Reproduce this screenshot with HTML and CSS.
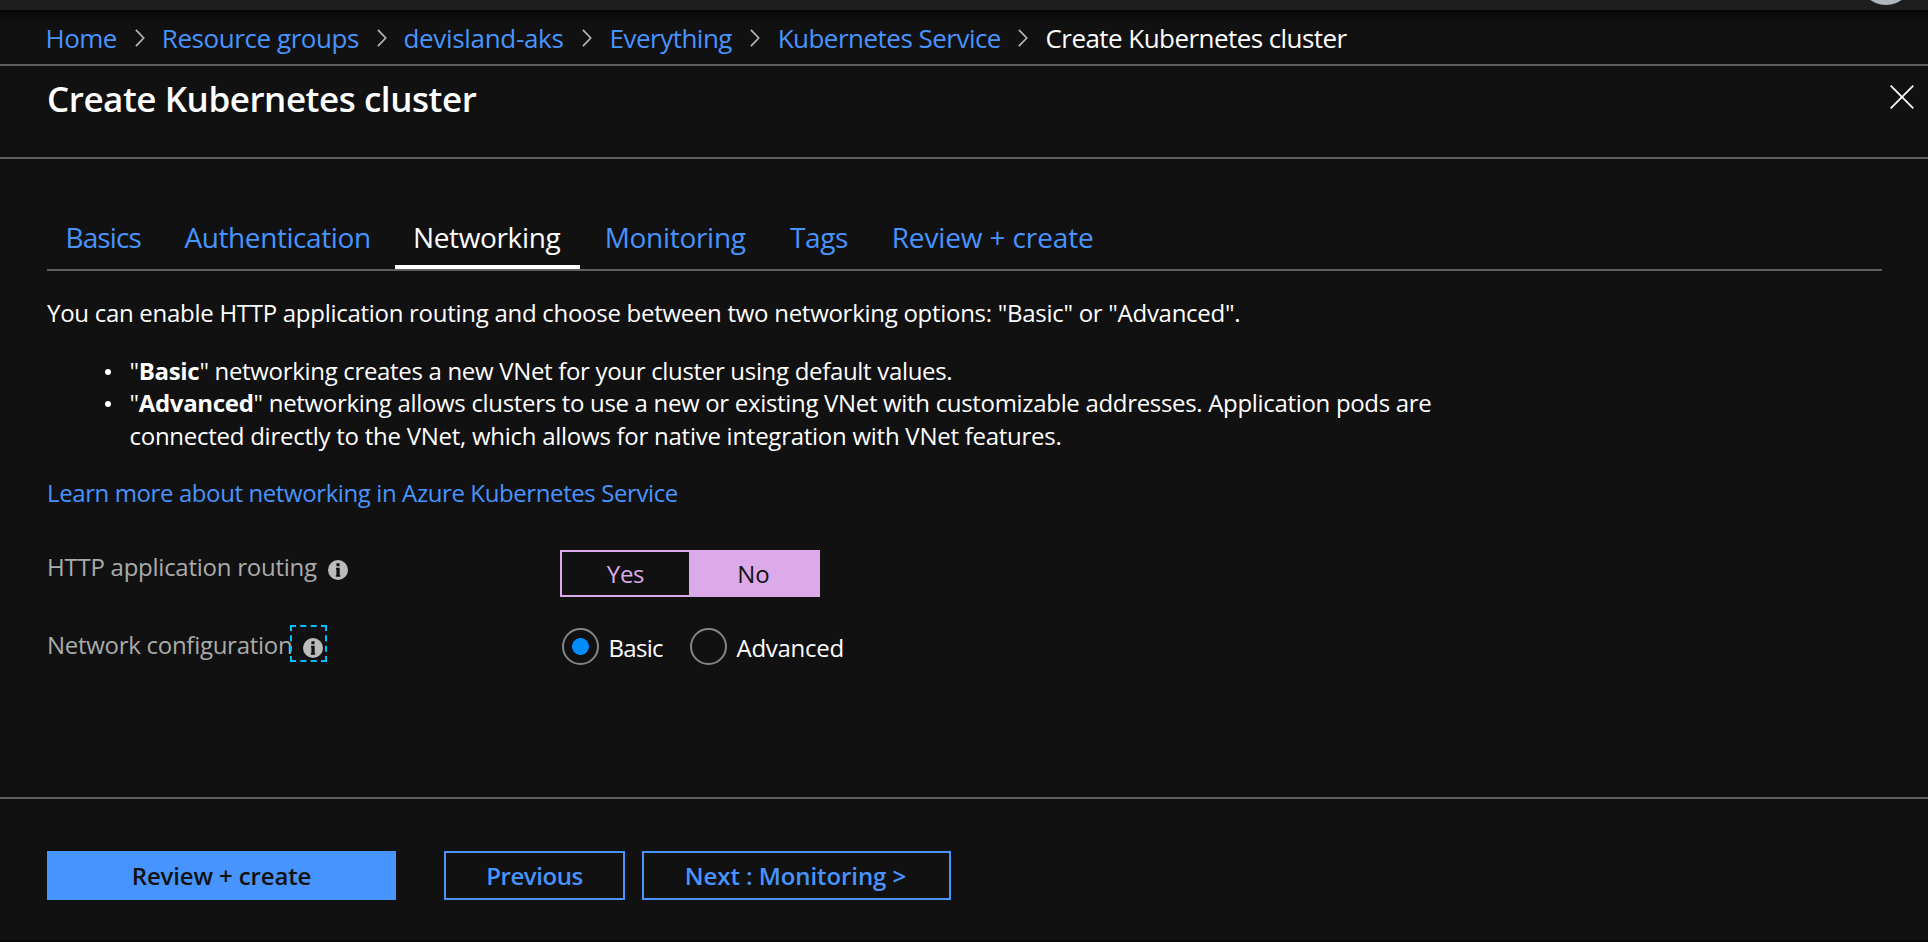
FILE: index.html
```html
<!DOCTYPE html>
<html lang="en">
<head>
<meta charset="utf-8">
<title>Create Kubernetes cluster</title>
<link rel="stylesheet" href="styles.css">
</head>
<body>
<div class="topbar"><span class="avatar"></span></div>
<nav class="crumbs">
  <a class="crumb home">Home</a>
  <svg class="chevron" viewBox="0 0 10 18"><path d="M.9 .9 8.7 9 .9 17.1"/></svg>
  <a class="crumb groups">Resource groups</a>
  <svg class="chevron" viewBox="0 0 10 18"><path d="M.9 .9 8.7 9 .9 17.1"/></svg>
  <a class="crumb island">devisland-aks</a>
  <svg class="chevron" viewBox="0 0 10 18"><path d="M.9 .9 8.7 9 .9 17.1"/></svg>
  <a class="crumb">Everything</a>
  <svg class="chevron" viewBox="0 0 10 18"><path d="M.9 .9 8.7 9 .9 17.1"/></svg>
  <a class="crumb">Kubernetes Service</a>
  <svg class="chevron" viewBox="0 0 10 18"><path d="M.9 .9 8.7 9 .9 17.1"/></svg>
  <span class="crumb current">Create Kubernetes cluster</span>
</nav>
<header class="titlebar">
  <h1 class="title">Create Kubernetes cluster</h1>
  <svg class="close" viewBox="0 0 24 24"><path d="M.7 .7 23.3 23.3M23.3 .7 .7 23.3"/></svg>
</header>
<main class="content">
  <div class="tabs">
    <a class="tab basics">Basics</a>
    <a class="tab auth">Authentication</a>
    <a class="tab active">Networking</a>
    <a class="tab monitoring">Monitoring</a>
    <a class="tab">Tags</a>
    <a class="tab review">Review + create</a>
  </div>
  <p class="intro">You can enable HTTP application routing and choose between two networking options: "Basic" or "Advanced".</p>
  <ul class="options">
    <li class="option">"<b>Basic</b>" networking creates a new VNet for your cluster using default values.</li>
    <li class="option">"<b>Advanced</b>" networking allows clusters to use a new or existing VNet with customizable addresses. Application pods are<br><span class="second-line">connected directly to the VNet, which allows for native integration with VNet features.</span></li>
  </ul>
  <a class="learn">Learn more about networking in Azure Kubernetes Service</a>
  <div class="field routing">
    <div class="label">HTTP application routing
      <svg class="info" viewBox="0 0 20 20"><circle cx="10" cy="10" r="10"/><path d="M8.4 3.2h3.2v3H8.4zM8 7.8h3.7v7.2h.5v1.7H7.8V15h.6V9.5H8z"/></svg>
    </div>
    <div class="toggle"><span class="choice">Yes</span><span class="choice on">No</span></div>
  </div>
  <div class="field network">
    <div class="label">Network configuration
      <span class="focus"><svg class="info" viewBox="0 0 20 20"><circle cx="10" cy="10" r="10"/><path d="M8.4 3.2h3.2v3H8.4zM8 7.8h3.7v7.2h.5v1.7H7.8V15h.6V9.5H8z"/></svg></span>
    </div>
    <div class="radios">
      <span class="radio checked"></span><span class="radio-text short">Basic</span>
      <span class="radio"></span><span class="radio-text">Advanced</span>
    </div>
  </div>
</main>
<footer class="footer">
  <button class="btn primary">Review + create</button>
  <button class="btn previous">Previous</button>
  <button class="btn next">Next : Monitoring &gt;</button>
</footer>
</body>
</html>
```
FILE: styles.css
```css
* { box-sizing: border-box; }
body {
  margin: 0;
  height: 942px;
  overflow: hidden;
  display: flex;
  flex-direction: column;
  background: #111;
  color: #fff;
  font: 24px/32.5px "Open Sans", "Noto Sans", sans-serif;
  letter-spacing: -0.28px;
  border-bottom: 2px solid #090909;
}
.topbar {
  position: relative;
  flex: none;
  height: 10px;
  overflow: hidden;
  background: #1e1e1e;
}
.avatar {
  position: absolute;
  right: 15px;
  bottom: 5px;
  width: 54px;
  height: 54px;
  border-radius: 50%;
  background: #b0b8be;
}
.crumbs {
  flex: none;
  height: 56px;
  padding: 2px 0 0 45.5px;
  display: grid;
  grid-template-columns: 89.5px 26.8px 215.2px 26.5px 178.5px 27.6px 140.9px 27.2px 240.6px 27.3px auto;
  align-items: center;
  background: linear-gradient(#060606, #111 12px);
  border-bottom: 2px solid #5e5e5e;
  font-size: 26px;
  letter-spacing: -0.52px;
  white-space: nowrap;
}
.crumb { color: #4894fe; }
.groups { letter-spacing: -0.43px; }
.island { letter-spacing: -0.32px; }
.current { color: #fff; letter-spacing: -0.56px; }
.chevron {
  width: 10px;
  height: 18px;
  fill: none;
  stroke: #b4b4b4;
  stroke-width: 1.7;
}
.titlebar {
  flex: none;
  height: 93px;
  padding: 9px 14px 0 47px;
  display: flex;
  justify-content: space-between;
  align-items: flex-start;
  border-bottom: 2px solid #5e5e5e;
}
.title {
  margin: 0;
  font-size: 35px;
  line-height: 48px;
  font-weight: 600;
  letter-spacing: -0.45px;
}
.close {
  width: 24px;
  height: 24px;
  margin-top: 10px;
  stroke: #fff;
  stroke-width: 1.8;
}
.content { flex: 1; padding: 46px 46px 0 47px; }
.tabs {
  height: 66px;
  display: grid;
  grid-template-columns: 120px 228px 191px 186px 101.7px auto;
  border-bottom: 2px solid #5e5e5e;
  font-size: 28px;
  line-height: 64px;
  letter-spacing: -0.36px;
}
.tab { padding-left: 18px; color: #4894fe; white-space: nowrap; }
.basics { padding-left: 18.5px; letter-spacing: -0.9px; }
.auth { padding-left: 17.5px; letter-spacing: -0.42px; }
.monitoring { padding-left: 18.7px; letter-spacing: -0.3px; }
.review { letter-spacing: -0.13px; }
.active {
  width: 185px;
  color: #fff;
  box-shadow: inset 0 -4px #fff;
}
.intro { margin: 26px 0 0; }
.options { margin: 25.2px 0 0; padding: 0 0 0 82.5px; list-style: none; line-height: 32.4px; }
.option { position: relative; letter-spacing: -0.32px; white-space: nowrap; }
.second-line { letter-spacing: -0.26px; }
.option::before {
  content: "";
  position: absolute;
  left: -25px;
  top: 14px;
  width: 6px;
  height: 6px;
  border-radius: 50%;
  background: #fff;
}
.learn {
  display: block;
  margin-top: 24.6px;
  color: #4894fe;
  letter-spacing: -0.4px;
}
.field { display: grid; grid-template-columns: 513px auto; }
.routing { height: 47px; margin-top: 40.5px; }
.network { height: 40px; margin-top: 28px; }
.label { display: flex; align-items: flex-start; color: #ababab; }
.info { display: block; width: 20px; height: 20px; fill: #bbb; }
.info path { fill: #111; }
.routing .label { line-height: 34.5px; letter-spacing: -0.25px; }
.routing .info { margin: 10px 0 0 11px; }
.network .label { line-height: 39px; }
.focus {
  width: 37px;
  height: 37px;
  margin-left: -2px;
  padding: 11px 0 0 10.5px;
  border: 2px dashed #00bfff;
}
.toggle {
  width: 260px;
  height: 47px;
  display: flex;
  border: 2px solid #dcaae8;
}
.choice {
  flex: none;
  width: 127px;
  height: 43px;
  line-height: 43.5px;
  text-align: center;
  color: #dcaae8;
}
.on { width: 129px; background: #dcaae8; color: #111; letter-spacing: 0; }
.radios { display: flex; align-items: center; padding: 1px 0 0 2px; line-height: 39px; }
.radio {
  width: 37px;
  height: 37px;
  margin-right: 9.5px;
  border: 2px solid #858585;
  border-radius: 50%;
}
.radio-text { padding-top: 2px; }
.checked { background: radial-gradient(circle, #008bff 8px, transparent 8.8px); }
.short { width: 81.5px; letter-spacing: -0.7px; }
.footer {
  flex: none;
  height: 143px;
  padding: 52px 0 0 47px;
  display: flex;
  border-top: 2px solid #5e5e5e;
}
.btn {
  height: 49px;
  padding: 1px 0 0;
  border: 2px solid #4894fe;
  background: transparent;
  color: #4894fe;
  font: 600 24px/44px "Open Sans", "Noto Sans", sans-serif;
  letter-spacing: -0.14px;
}
.primary { width: 349px; background: #4894fe; color: #111; }
.previous { width: 181px; margin-left: 48px; letter-spacing: -0.45px; }
.next { width: 309px; margin-left: 17px; padding-right: 2px; letter-spacing: -0.08px; }
```
